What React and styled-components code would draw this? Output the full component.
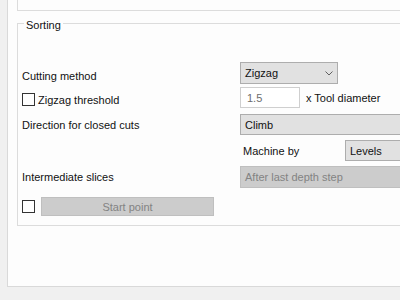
import React from 'react'
import styled, { createGlobalStyle } from 'styled-components'

const Global = createGlobalStyle`
  html, body {
    margin: 0;
    padding: 0;
    background: #f0f0f0;
    overflow: hidden;
  }
  body {
    font-family: 'Liberation Sans', Arial, sans-serif;
    font-size: 11px;
    color: #111;
  }
`

const Screen = styled.div`
  width: 400px;
  height: 300px;
  overflow: hidden;
  padding-left: 7px;
  box-sizing: border-box;
`

const Panel = styled.div`
  width: 470px;
  height: 287px;
  box-sizing: border-box;
  background: #fdfdfd;
  border-left: 1px solid #d9d9d9;
  border-bottom: 1px solid #d9d9d9;
  padding-left: 9px;
`

const UpperGroup = styled.div`
  height: 10px;
  border-left: 1px solid #dcdcdc;
  border-bottom: 1px solid #dcdcdc;
`

const Group = styled.div`
  position: relative;
  margin-top: 12px;
  border: 1px solid #dcdcdc;
  border-right: none;
  padding: 38px 0 9px 4px;
`

const Legend = styled.span`
  position: absolute;
  top: -6px;
  left: 6px;
  padding: 0 2px;
  background: #fdfdfd;
  line-height: 14px;
`

const Row = styled.div`
  display: flex;
  align-items: center;
  height: ${p => p.h || 21}px;
  margin-top: ${p => p.gap || 0}px;
`

const Label = styled.div`
  width: 218px;
  flex: none;
  display: flex;
  align-items: center;
  white-space: nowrap;
  padding-top: ${p => p.drop || 0}px;
  box-sizing: border-box;
`

const Check = styled.span`
  display: inline-block;
  width: 13px;
  height: 13px;
  box-sizing: border-box;
  border: 1px solid #333;
  background: #fff;
  margin-right: ${p => p.mr || 3}px;
  flex: none;
`

const Combo = styled.div`
  display: flex;
  align-items: center;
  justify-content: space-between;
  box-sizing: border-box;
  width: ${p => p.w ? p.w + 'px' : 'auto'};
  flex: ${p => p.w ? 'none' : 1};
  height: ${p => p.h || 21}px;
  padding: 0 4px 0 4px;
  background: ${p => p.disabled ? '#cccccc' : '#e1e1e1'};
  border: 1px solid ${p => p.disabled ? '#bfbfbf' : '#adadad'};
  color: ${p => p.disabled ? '#838383' : '#111'};
`

const TextBox = styled.div`
  width: 60px;
  height: 21px;
  box-sizing: border-box;
  border: 1px solid #cfcfcf;
  background: #fff;
  color: #6d6d6d;
  padding: 0 6px;
  display: flex;
  align-items: center;
  flex: none;
`

const Suffix = styled.span`
  margin-left: 6px;
`

const SubLabel = styled.span`
  width: 102px;
  padding-left: 3px;
  flex: none;
`

const Button = styled.div`
  width: 173px;
  height: 19px;
  box-sizing: border-box;
  background: #cccccc;
  border: 1px solid #bfbfbf;
  color: #838383;
  display: flex;
  align-items: center;
  justify-content: center;
`

const Chevron = () => (
  <svg width="8" height="5" viewBox="0 0 8 5">
    <path d="M0.5 0.5 L4 4 L7.5 0.5" fill="none" stroke="#606060" strokeWidth="1" />
  </svg>
)

export default function App() {
  return (
    <Screen>
      <Global />
      <Panel>
        <UpperGroup />
        <Group>
          <Legend>Sorting</Legend>
          <Row h={22}>
            <Label drop={5}>Cutting method</Label>
            <Combo w={98} h={22}>Zigzag<Chevron /></Combo>
          </Row>
          <Row gap={3}>
            <Label drop={4}><Check />Zigzag threshold</Label>
            <TextBox>1.5</TextBox>
            <Suffix>x Tool diameter</Suffix>
          </Row>
          <Row gap={6}>
            <Label>Direction for closed cuts</Label>
            <Combo>Climb</Combo>
          </Row>
          <Row gap={5}>
            <Label />
            <SubLabel>Machine by</SubLabel>
            <Combo>Levels</Combo>
          </Row>
          <Row gap={5} h={22}>
            <Label>Intermediate slices</Label>
            <Combo disabled h={22}>After last depth step</Combo>
          </Row>
          <Row gap={9} h={19}>
            <Check mr={6} />
            <Button>Start point</Button>
          </Row>
        </Group>
      </Panel>
    </Screen>
  )
}
